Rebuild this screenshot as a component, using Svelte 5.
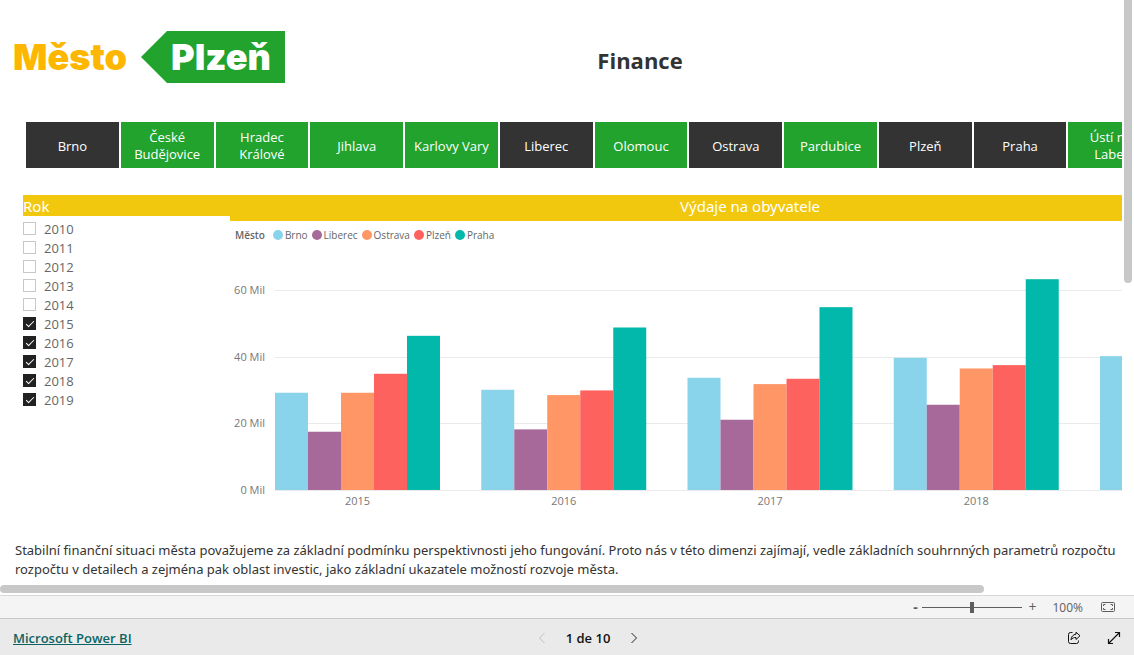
<script>
  const cities = [
    { name: 'Brno', selected: true },
    { name: 'České Budějovice', selected: false },
    { name: 'Hradec Králové', selected: false },
    { name: 'Jihlava', selected: false },
    { name: 'Karlovy Vary', selected: false },
    { name: 'Liberec', selected: true },
    { name: 'Olomouc', selected: false },
    { name: 'Ostrava', selected: true },
    { name: 'Pardubice', selected: false },
    { name: 'Plzeň', selected: true },
    { name: 'Praha', selected: true },
    { name: 'Ústí nad Labem', selected: false }
  ];

  let years = [2010, 2011, 2012, 2013, 2014, 2015, 2016, 2017, 2018, 2019].map((year) => ({
    year,
    checked: year >= 2015
  }));

  const series = [
    { name: 'Brno', color: '#8ad4eb' },
    { name: 'Liberec', color: '#a66999' },
    { name: 'Ostrava', color: '#fe9666' },
    { name: 'Plzeň', color: '#fd625e' },
    { name: 'Praha', color: '#01b8aa' }
  ];

  const expenses = [
    { year: 2015, values: [29.2, 17.5, 29.2, 34.9, 46.3] },
    { year: 2016, values: [30.1, 18.2, 28.5, 29.9, 48.8] },
    { year: 2017, values: [33.7, 21.1, 31.8, 33.4, 54.9] },
    { year: 2018, values: [39.7, 25.6, 36.5, 37.5, 63.3] },
    { year: '', values: [40.2] }
  ];

  const ticks = [0, 20, 40, 60];

  // chart geometry
  const left = 45;
  const base = 240;
  const barWidth = 33;
  const step = 206.25;
  const scale = 3.33;

  let zoom = 50;

  const y = (value) => base - value * scale;
</script>

<div class="app">
  <main class="viewport">
    <div class="report">
      <header class="header">
        <div class="logo">
          <span class="logo-city">Město</span>
          <span class="logo-tag">Plzeň</span>
        </div>
        <h1>Finance</h1>
      </header>

      <div class="tiles">
        {#each cities as city}
          <button class="tile" class:selected={city.selected}>{city.name}</button>
        {/each}
      </div>

      <div class="visuals">
        <section class="slicer">
          <h2 class="slicer-title">Rok</h2>
          {#each years as item}
            <label class="year">
              <input type="checkbox" bind:checked={item.checked} />
              <span>{item.year}</span>
            </label>
          {/each}
        </section>

        <section class="chart">
          <h2 class="chart-title">Výdaje na obyvatele</h2>
          <div class="legend">
            <strong>Město</strong>
            {#each series as s}
              <span class="legend-item">
                <svg width="10" height="10" viewBox="0 0 10 10"><circle cx="5" cy="5" r="5" fill={s.color} /></svg>
                {s.name}
              </span>
            {/each}
          </div>
          <svg class="plot" viewBox="0 0 1040 264" width="1040" height="264">
            {#each ticks as tick}
              <line x1={left} x2="1035" y1={Math.round(y(tick)) + 0.5} y2={Math.round(y(tick)) + 0.5} />
              <text x="35" y={y(tick) + 4} text-anchor="end">{tick} Mil</text>
            {/each}
            {#each expenses as group, g}
              {#each group.values as value, i}
                <rect
                  x={left + g * step + i * barWidth}
                  y={y(value)}
                  width={barWidth}
                  height={value * scale}
                  fill={series[i].color}
                />
              {/each}
              {#if group.year}
                <text x={left + g * step + barWidth * 2.5} y={base + 15} text-anchor="middle">{group.year}</text>
              {/if}
            {/each}
          </svg>
        </section>
      </div>

      <p class="description">
        Stabilní finanční situaci města považujeme za základní podmínku perspektivnosti jeho fungování. Proto nás v této dimenzi zajímají, vedle základních souhrnných parametrů rozpočtu<br />
        rozpočtu v detailech a zejména pak oblast investic, jako základní ukazatele možností rozvoje města.
      </p>
    </div>
    <div class="scroll-y"><div class="thumb"></div></div>
    <div class="scroll-x"><div class="thumb"></div></div>
  </main>

  <div class="zoom-bar">
    <button class="zoom-step minus" aria-label="Zoom out">-</button>
    <input type="range" min="0" max="100" bind:value={zoom} aria-label="Zoom" />
    <button class="zoom-step" aria-label="Zoom in">+</button>
    <span class="zoom-value">100%</span>
    <button class="icon-button" aria-label="Fit to page">
      <svg width="14" height="10" viewBox="0 0 14 10" fill="none" stroke="#605e5c">
        <rect x="0.5" y="0.5" width="13" height="9" rx="1" />
        <path d="M2.5 4V2.5H4.5M9.5 2.5h2V4M11.5 6v1.5h-2M4.5 7.5h-2V6" />
      </svg>
    </button>
  </div>

  <footer class="footer">
    <a href="#powerbi">Microsoft Power BI</a>
    <nav class="pager">
      <button class="icon-button" aria-label="Previous page" disabled>
        <svg width="8" height="12" viewBox="0 0 8 12" fill="none" stroke="#c0c0c0"><path d="M6.5 1L1.5 6l5 5" /></svg>
      </button>
      <span>1 de 10</span>
      <button class="icon-button" aria-label="Next page">
        <svg width="8" height="12" viewBox="0 0 8 12" fill="none" stroke="#222"><path d="M1.5 1l5 5-5 5" /></svg>
      </button>
    </nav>
    <div class="actions">
      <button class="icon-button" aria-label="Share">
        <svg width="14" height="14" viewBox="0 0 14 14" fill="none" stroke="#111" stroke-linejoin="round">
          <path d="M5.5 1.5H3.500A2 2 0 0 0 1.500 3.500V10.500A2 2 0 0 0 3.500 12.500H9.500A2 2 0 0 0 11.500 10.500V9.500" />
          <path d="M9 1.200L13 4.800 9 8.500V6.500C6.800 6.400 5.200 7.200 4 8.800 4.200 5.800 6 3.500 9 3.200z" />
        </svg>
      </button>
      <button class="icon-button" aria-label="Full screen">
        <svg width="14" height="14" viewBox="0 0 14 14" fill="none" stroke="#111" stroke-width="1.200">
          <path d="M1.500 12.500l11-11M8 1.500h4.500V6M1.500 8v4.500H6" />
        </svg>
      </button>
    </div>
  </footer>
</div>

<style>
  :global(body) {
    margin: 0;
    background: #fff;
  }

  .app {
    display: flex;
    flex-direction: column;
    height: 100vh;
    overflow: hidden;
    font-family: 'Open Sans', 'Noto Sans', sans-serif;
    color: #333;
  }

  button {
    padding: 0;
    border: 0;
    background: none;
    font-family: inherit;
    color: inherit;
  }

  h1,
  h2,
  p {
    margin: 0;
  }

  .viewport {
    flex: 1;
    min-height: 0;
    display: grid;
    grid-template-columns: minmax(0, 1fr) 12px;
    grid-template-rows: minmax(0, 1fr) 10px;
  }

  .report {
    overflow: hidden;
  }

  .header,
  .tiles,
  .visuals,
  .description {
    box-sizing: border-box;
    width: 1280px;
  }

  .header {
    display: grid;
    grid-template-columns: 1fr auto 1fr;
    align-items: center;
    height: 122px;
    padding: 0 13px 8px;
  }

  .logo {
    display: flex;
    align-items: center;
    gap: 12px;
    font-family: Inter, sans-serif;
    font-size: 36px;
    font-weight: 900;
    line-height: 52px;
  }

  .logo-city {
    width: 116px;
    color: #fdb700;
  }

  .logo-tag {
    box-sizing: border-box;
    width: 144px;
    padding-left: 30px;
    background: #21a32e;
    color: #fff;
    clip-path: polygon(26px 0, 100% 0, 100% 100%, 26px 100%, 0 50%);
  }

  h1 {
    padding-top: 6px;
    font-size: 22px;
    line-height: 32px;
  }

  .tiles {
    display: grid;
    grid-template-columns: repeat(13, 1fr);
    gap: 2px;
    padding: 0 24px 0 26px;
  }

  .tile {
    height: 46px;
    padding: 2px 8px 0;
    background: #21a32e;
    color: #fff;
    font-size: 13px;
    line-height: 17px;
  }

  .tile.selected {
    background: #333;
  }

  .visuals {
    display: grid;
    grid-template-columns: 207px 1040px;
    padding: 27px 0 0 23px;
  }

  .slicer-title,
  .chart-title {
    background: #f2c80f;
    color: #fff;
    font-family: 'Noto Sans', sans-serif;
    font-size: 15px;
    font-weight: 400;
  }

  .slicer-title {
    height: 21px;
    margin-bottom: 3px;
    line-height: 23px;
  }

  .year {
    display: flex;
    align-items: center;
    gap: 8px;
    height: 19px;
    font-size: 13px;
    color: #666;
  }

  .year input {
    appearance: none;
    display: grid;
    place-items: center;
    box-sizing: border-box;
    width: 13px;
    height: 13px;
    margin: 0;
    border: 1px solid #c8c8c8;
  }

  .year input:checked {
    border-color: #212121;
    background: #212121;
  }

  .year input:checked::after {
    content: '';
    width: 7px;
    height: 3px;
    border: solid #fff;
    border-width: 0 0 1px 1px;
    transform: translateY(-1px) rotate(-45deg);
  }

  .chart-title {
    height: 26px;
    line-height: 23px;
    text-align: center;
  }

  .legend {
    display: flex;
    align-items: center;
    gap: 4px;
    height: 27px;
    padding: 0 0 2px 5px;
    font-size: 10px;
    color: #666;
  }

  .legend strong {
    margin-right: 4px;
    font-weight: 600;
  }

  .legend-item {
    display: flex;
    align-items: center;
    gap: 2px;
  }

  .plot {
    display: block;
  }

  .plot line {
    stroke: #eaeaea;
  }

  .plot text {
    font-size: 11px;
    fill: #777;
  }

  .description {
    padding: 27px 15px 0;
    font-family: 'Noto Sans', sans-serif;
    font-size: 13px;
    line-height: 19px;
    white-space: nowrap;
  }

  .scroll-y {
    padding: 0 2px;
  }

  .thumb {
    border-radius: 4px;
    background: #c8c8c8;
  }

  .scroll-y .thumb {
    height: 48.4%;
    border-radius: 0 0 4px 4px;
  }

  .scroll-x .thumb {
    width: 87.7%;
    height: 8px;
  }

  .zoom-bar {
    display: flex;
    align-items: center;
    justify-content: flex-end;
    height: 22px;
    padding-right: 19px;
    border-top: 1px solid #d8d8d8;
    border-bottom: 1px solid #c8c8c8;
    background: #f4f4f4;
    font-size: 12px;
    color: #605e5c;
  }

  .zoom-step {
    width: 14px;
    font-size: 14px;
    line-height: 20px;
  }

  .minus {
    font-weight: 700;
  }

  .zoom-bar input {
    appearance: none;
    width: 100px;
    height: 1px;
    margin: 0 3px 0 0;
    background: #605e5c;
  }

  .zoom-bar input::-webkit-slider-thumb {
    appearance: none;
    width: 4px;
    height: 11px;
    background: #605e5c;
  }

  .zoom-value {
    margin: 0 18px 0 13px;
  }

  .icon-button {
    display: flex;
  }

  .footer {
    display: grid;
    grid-template-columns: 1fr auto 1fr;
    align-items: center;
    height: 36px;
    padding: 2px 13px 0;
    box-sizing: border-box;
    background: #eaeaea;
    font-size: 13px;
    font-weight: 600;
  }

  .footer a {
    color: #0b6462;
  }

  .pager {
    display: flex;
    align-items: center;
    gap: 20px;
    padding-left: 42px;
    color: #111;
  }

  .actions {
    display: flex;
    justify-content: flex-end;
    gap: 26px;
  }
</style>
